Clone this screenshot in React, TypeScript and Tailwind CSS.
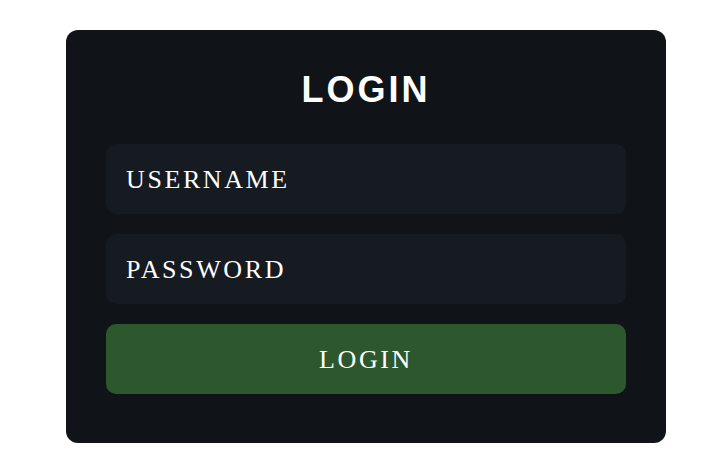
import React from "react";

export default function App() {
  return (
    <div className="w-[728px] h-[476px] bg-white pt-[30px] pl-[66px]">
      <div className="w-[600px] h-[413px] rounded-[12px] bg-[#101318] px-[40px] pt-[39px] flex flex-col">
        <h1
          className="h-[42px] leading-[42px] text-center text-white text-[36px] font-bold tracking-[3px] mb-[33px]"
          style={{ fontFamily: '"Liberation Sans", Arial, sans-serif' }}
        >
          LOGIN
        </h1>
        <div
          className="flex flex-col gap-[20px] text-white text-[26px] tracking-[0.1em]"
          style={{ fontFamily: '"Liberation Serif", "Times New Roman", serif' }}
        >
          <div className="h-[70px] rounded-[10px] bg-[#161a21] px-[20px] flex items-center">
            USERNAME
          </div>
          <div className="h-[70px] rounded-[10px] bg-[#161a21] px-[20px] flex items-center">
            PASSWORD
          </div>
          <button className="h-[70px] rounded-[10px] bg-[#2d572d] flex items-center justify-center text-white text-[26px] tracking-[0.1em]">
            LOGIN
          </button>
        </div>
      </div>
    </div>
  );
}
